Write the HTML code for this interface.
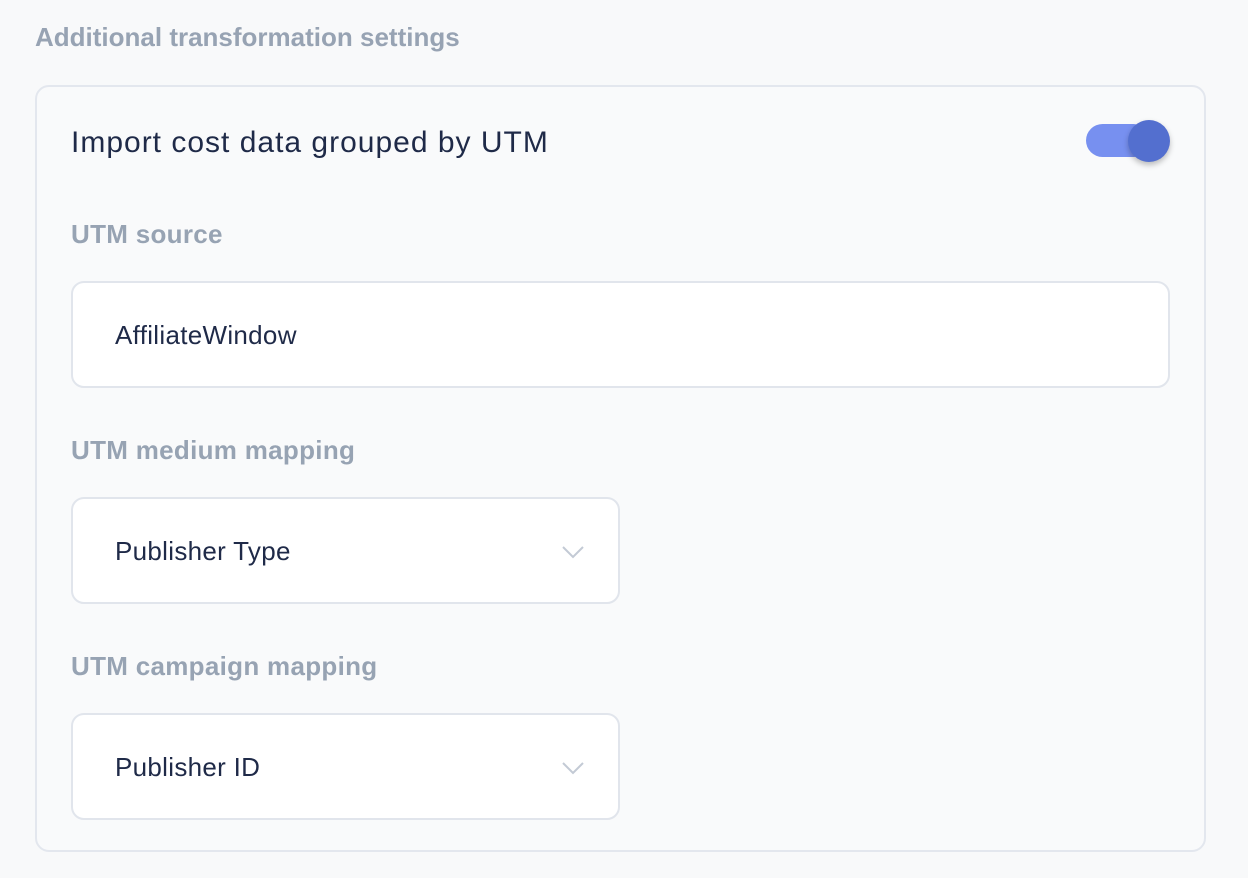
<!DOCTYPE html>
<html><head><style>
body{margin:0;width:1248px;height:878px;background:#f8f9fa;font-family:"Liberation Sans",sans-serif;position:relative;overflow:hidden}
.t{position:absolute;left:35px;top:22px;font-size:26px;font-weight:bold;color:#97a3b3;letter-spacing:0px}
.card{position:absolute;left:35px;top:85px;width:1171px;height:767px;border:2px solid #e3e7ee;border-radius:14px;background:#f9fafb;box-sizing:border-box}
.imp{position:absolute;left:71px;top:126px;font-size:30px;color:#1f2a48;letter-spacing:1.0px}
.lab{position:absolute;left:71px;font-size:26px;font-weight:bold;color:#97a3b3;letter-spacing:0.3px}
.box{position:absolute;left:71px;background:#fff;border:2px solid #e1e5ec;border-radius:13px;box-sizing:border-box;height:107px}
.box span{position:absolute;left:42px;top:37px;font-size:26px;color:#1f2a48;letter-spacing:0.3px}
.box svg{position:absolute;right:34px;top:47px}
.track{position:absolute;left:1086px;top:124px;width:64px;height:33px;border-radius:17px;background:#7790f0}
.knob{position:absolute;left:1128px;top:120px;width:42px;height:42px;border-radius:50%;background:#536fcf;box-shadow:0 3px 6px rgba(0,0,0,.25)}
</style></head><body>
<div class="t">Additional transformation settings</div>
<div class="card"></div>
<div class="imp">Import cost data grouped by UTM</div>
<div class="track"></div><div class="knob"></div>
<div class="lab" style="top:219px">UTM source</div>
<div class="box" style="top:281px;width:1099px"><span>AffiliateWindow</span></div>
<div class="lab" style="top:435px">UTM medium mapping</div>
<div class="box" style="top:497px;width:549px"><span>Publisher Type</span><svg width="22" height="13" viewBox="0 0 22 13"><path d="M1 1L11 11L21 1" fill="none" stroke="#c3cad5" stroke-width="2"/></svg></div>
<div class="lab" style="top:651px">UTM campaign mapping</div>
<div class="box" style="top:713px;width:549px"><span>Publisher ID</span><svg width="22" height="13" viewBox="0 0 22 13"><path d="M1 1L11 11L21 1" fill="none" stroke="#c3cad5" stroke-width="2"/></svg></div>
</body></html>
